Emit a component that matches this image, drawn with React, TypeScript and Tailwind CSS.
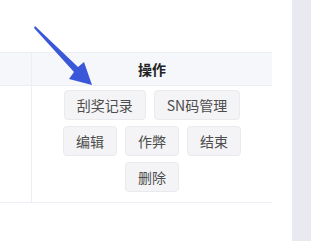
import React from "react";

const Btn = ({ children }: { children: React.ReactNode }) => (
  <button className="h-[30px] px-3 rounded-[4px] border border-[#e9eaee] bg-[#f4f4f6] text-[14px] leading-none text-[#4d4d4d]">
    {children}
  </button>
);

export default function App() {
  return (
    <div
      className="relative flex w-[311px] h-[241px] bg-white overflow-hidden"
      style={{ fontFamily: '"Noto Sans CJK SC", "Noto Sans", sans-serif' }}
    >
      <div className="w-[292px] h-full pt-[52px]">
        <div className="w-[272px]">
          <div className="flex h-[34px] border-y border-[#ebeef5] bg-[#f5f7fa]">
            <div className="w-[32px] border-r border-[#ebeef5]" />
            <div className="flex-1 flex items-center justify-center text-[14px] font-bold text-[#222222]">
              操作
            </div>
          </div>
          <div className="flex border-b border-[#ebeef5]">
            <div className="w-[32px] border-r border-[#ebeef5]" />
            <div className="flex-1 px-3 pt-[4px] pb-[10px]">
              <div className="flex flex-wrap justify-center gap-x-2 gap-y-[6px]">
                <Btn>刮奖记录</Btn>
                <Btn>SN码管理</Btn>
                <Btn>编辑</Btn>
                <Btn>作弊</Btn>
                <Btn>结束</Btn>
                <Btn>删除</Btn>
              </div>
            </div>
          </div>
        </div>
      </div>
      <div className="flex-1 h-full bg-[#e9eaef]" />
      <svg className="absolute left-0 top-0" width="311" height="241" viewBox="0 0 311 241">
        <polygon
          points="35,26 78,67 84,62 92,85 69,79 74,72 34,28"
          fill="#3b57d9"
        />
      </svg>
    </div>
  );
}
